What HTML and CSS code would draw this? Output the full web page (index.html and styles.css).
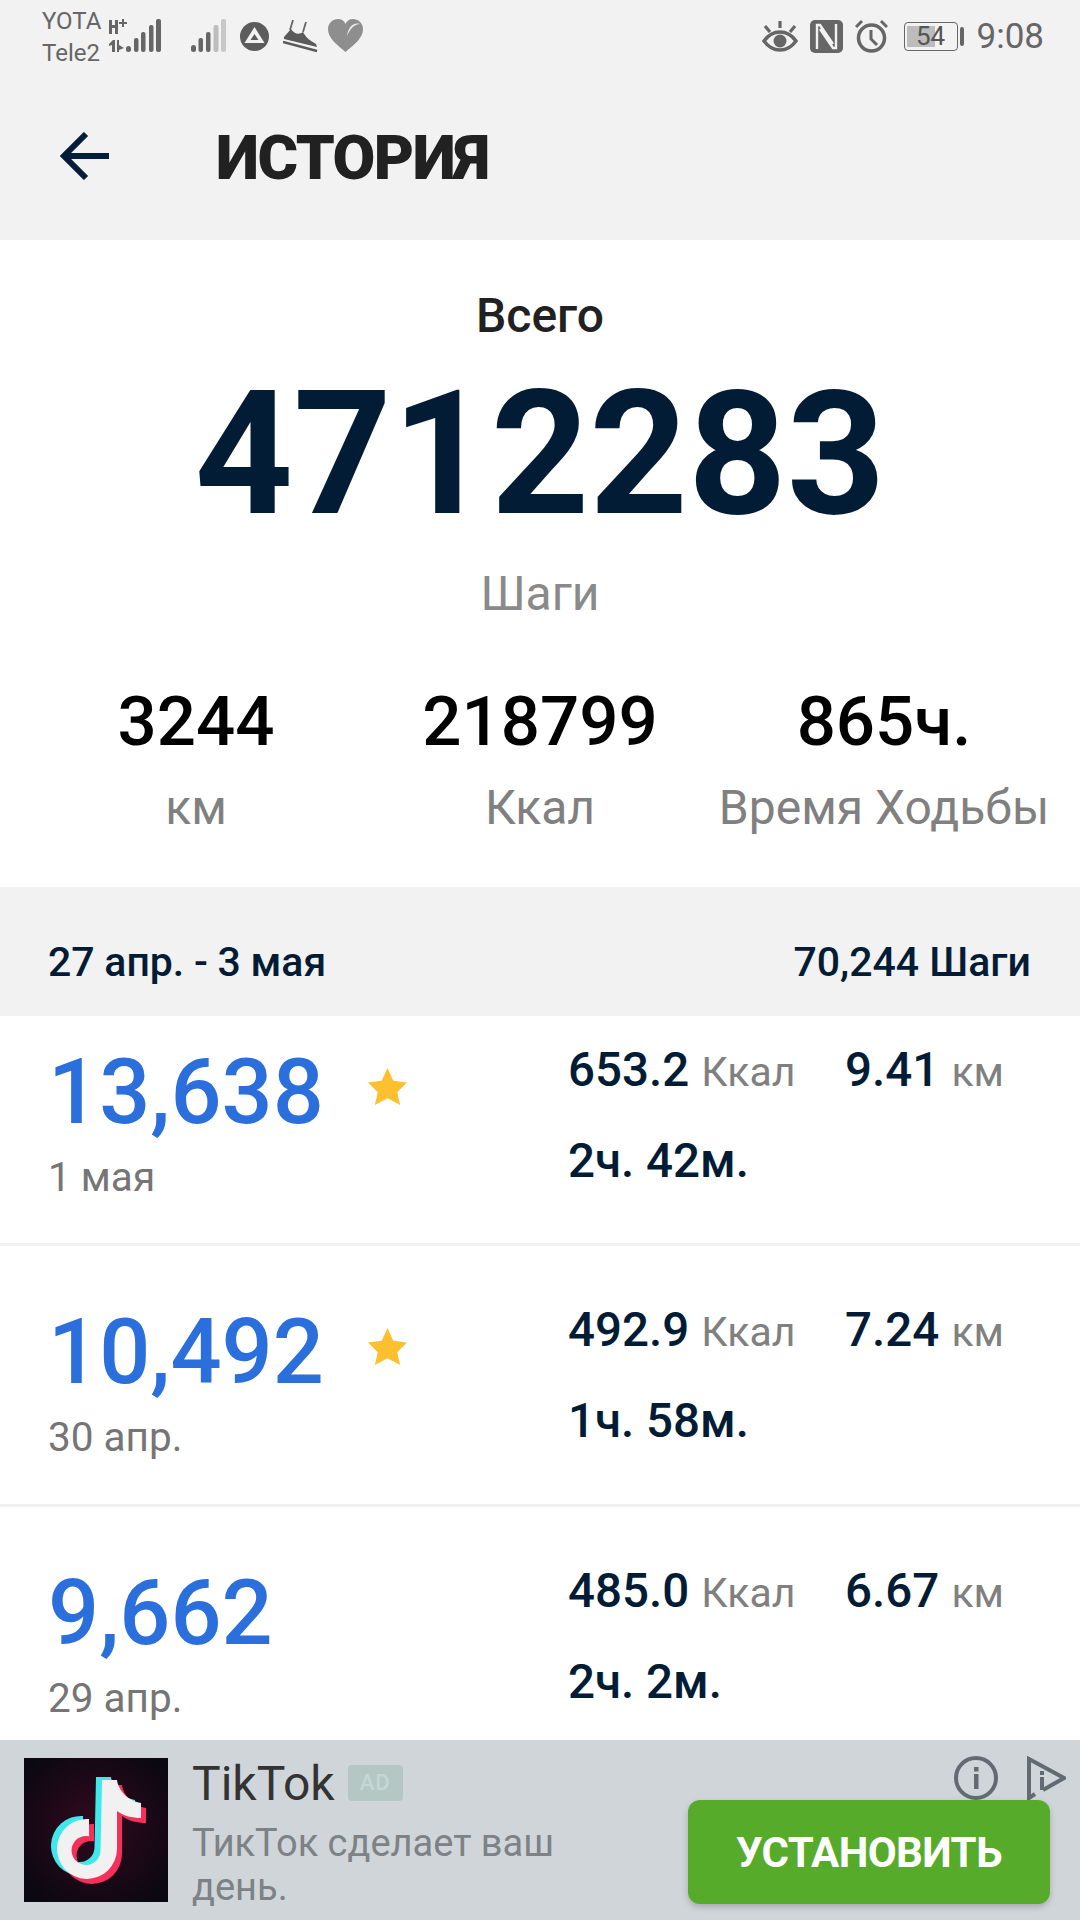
FILE: index.html
```html
<!DOCTYPE html>
<html lang="ru">
<head>
<meta charset="utf-8">
<title>История</title>
<link rel="stylesheet" href="styles.css">
</head>
<body>
<div class="page">
  <header class="top">
    <div class="status">
      <div class="status-left">
        <div class="carriers"><span>YOTA</span><span>Tele2</span></div>
        <svg class="ic-sig1" viewBox="0 0 52 33" width="52" height="33">
          <g fill="#666">
            <path d="M0 1h3v5h3V1h3v14H6V9H3v6H0z"/><path d="M10 3h3V0h2v3h3v2h-3v3h-2V5h-3z"/>
            <path d="M0 25l4-4h2v12H3v-7l-3 1zM8 21h2v5l5 3-5 2v2H8z"/>
            <rect x="17" y="27" width="5" height="6" rx="2.5"/><rect x="25" y="19" width="4.5" height="14" rx="2"/><rect x="32" y="13" width="4.5" height="20" rx="2"/><rect x="40" y="6" width="4.5" height="27" rx="2"/><rect x="47" y="0" width="5" height="33" rx="2"/>
          </g>
        </svg>
        <svg class="ic-sig2" viewBox="0 0 35 33" width="35" height="33">
          <rect x="0" y="26" width="5" height="7" rx="2.5" fill="#666"/><rect x="7.5" y="19" width="4.5" height="14" rx="2" fill="#666"/><rect x="15" y="13" width="4.5" height="20" rx="2" fill="#666"/><rect x="22.5" y="6" width="5" height="27" rx="2" fill="#bdbdbd"/><rect x="30" y="0" width="5" height="33" rx="2" fill="#c8c8c8"/>
        </svg>
        <svg class="ic-a" viewBox="0 0 29 29" width="29" height="29">
          <circle cx="14.500" cy="14.500" r="14.500" fill="#5c5c5c"/><path d="M14.500 5L24.500 21H4.500zM14.500 12L10.500 18H18.500z" fill="#f2f2f2" fill-rule="evenodd"/>
        </svg>
        <svg class="ic-shoe" viewBox="0 0 35 33" width="35" height="33">
          <path d="M10 0L7 10M23 2L20 12" stroke="#666" stroke-width="1.800" fill="none"/>
          <path d="M1 17L8 9C11 14 16 15 20 12 23 18 28 21 33 24L34 27 1 19z" fill="#5a5a5a"/>
          <path d="M0 22L34 31" stroke="#5a5a5a" stroke-width="2.600" fill="none"/>
        </svg>
        <svg class="ic-heart" viewBox="0 0 35 33" width="35" height="33">
          <path d="M17.500 33C8 25 0 19 0 10 0 4 5 0 10 0c4 0 6.500 2 7.500 5 1-3 3.500-5 7.500-5 5 0 10 4 10 10 0 9-8 15-17.500 23z" fill="#8e8e8e"/>
          <path d="M19 17C20 9 25 3 32 5 26 5 22 10 19 17z" fill="#efefef"/>
        </svg>
      </div>
      <div class="status-right">
        <svg class="ic-eye" viewBox="0 0 36 31" width="36" height="31">
          <path d="M2 20C7 13 12 11 18 11s11 2 16 9c-5 7-10 9-16 9S7 27 2 20z" fill="none" stroke="#666" stroke-width="3.500"/><circle cx="18" cy="20" r="6.500" fill="#666"/>
          <path d="M18 0v7M3 5l5 6M33 5l-5 6" stroke="#666" stroke-width="3.200" fill="none"/>
        </svg>
        <svg class="ic-nfc" viewBox="0 0 33 33" width="33" height="33">
          <rect width="33" height="33" rx="5" fill="#666"/><path d="M7 29V5h3l13 19M26 4v24h-3L10 9" stroke="#f2f2f2" stroke-width="2.400" fill="none"/>
        </svg>
        <svg class="ic-clock" viewBox="0 0 33 34" width="33" height="34">
          <circle cx="16.500" cy="19" r="13" fill="none" stroke="#666" stroke-width="3.500"/><path d="M16 11v9l6 6" fill="none" stroke="#666" stroke-width="3"/><path d="M1 8l6-6M32 8l-6-6" stroke="#666" stroke-width="3"/>
        </svg>
        <div class="battery"><div class="battery-body"><div class="battery-fill"></div><span>54</span></div><div class="battery-tip"></div></div>
        <span class="clock">9:08</span>
      </div>
    </div>
    <div class="toolbar">
      <svg class="back" viewBox="0 0 49 48" width="49" height="48">
        <path d="M49 24H4M26 2L4 24l22 22" fill="none" stroke="#021e3a" stroke-width="6"/>
      </svg>
      <h1>ИСТОРИЯ</h1>
    </div>
  </header>

  <section class="summary">
    <div class="total-label">Всего</div>
    <div class="total">4712283</div>
    <div class="total-unit">Шаги</div>
    <div class="stats">
      <div class="stat"><b>3244</b><span>км</span></div>
      <div class="stat"><b>218799</b><span>Ккал</span></div>
      <div class="stat"><b>865ч.</b><span>Время Ходьбы</span></div>
    </div>
  </section>

  <div class="week"><span class="week-range">27 апр. - 3 мая</span><span>70,244 Шаги</span></div>

  <main class="list">
    <article class="row row-first">
      <div class="day">
        <div class="steps"><span>13,638</span><svg class="star" viewBox="0 0 40 38" width="41" height="37"><path d="M20 0l6 13 14 2-10 10 3 13-13-7-13 7 3-13L0 15l14-2z" fill="#fdc02f"/></svg></div>
        <div class="date">1 мая</div>
      </div>
      <div class="metrics">
        <div class="m m-kcal"><b>653.2</b> <span>Ккал</span></div><div class="m"><b>9.41</b> <span>км</span></div>
        <div class="m m-time"><b>2ч. 42м.</b></div>
      </div>
    </article>
    <article class="row">
      <div class="day">
        <div class="steps"><span>10,492</span><svg class="star" viewBox="0 0 40 38" width="41" height="37"><path d="M20 0l6 13 14 2-10 10 3 13-13-7-13 7 3-13L0 15l14-2z" fill="#fdc02f"/></svg></div>
        <div class="date">30 апр.</div>
      </div>
      <div class="metrics">
        <div class="m m-kcal"><b>492.9</b> <span>Ккал</span></div><div class="m"><b>7.24</b> <span>км</span></div>
        <div class="m m-time"><b>1ч. 58м.</b></div>
      </div>
    </article>
    <article class="row">
      <div class="day">
        <div class="steps"><span>9,662</span></div>
        <div class="date">29 апр.</div>
      </div>
      <div class="metrics">
        <div class="m m-kcal"><b>485.0</b> <span>Ккал</span></div><div class="m"><b>6.67</b> <span>км</span></div>
        <div class="m m-time"><b>2ч. 2м.</b></div>
      </div>
    </article>
  </main>

  <aside class="ad">
    <svg class="ad-icon" viewBox="0 0 144 144" width="144" height="144">
      <defs>
        <radialGradient id="tkbg" cx="50%" cy="48%" r="62%"><stop offset="0" stop-color="#33091f"/><stop offset="1" stop-color="#0b0811"/></radialGradient>
        <path id="note" d="M78 22H93C94 31 103 43 117 45V60C108 60 100 58 93 53V91A30 30 0 1 1 65 61V78.300A14.500 14.500 0 1 0 76.500 92.500Z"/>
      </defs>
      <rect width="144" height="144" fill="url(#tkbg)"/>
      <use href="#note" transform="translate(-6 -3)" fill="#3fe8ec"/>
      <use href="#note" transform="translate(5 5)" fill="#f5305a"/>
      <use href="#note" fill="#f2f1f2"/>
    </svg>
    <div class="ad-text">
      <div class="ad-title"><span>TikTok</span><em>AD</em></div>
      <p>ТикТок сделает ваш день.</p>
    </div>
    <div class="ad-flags">
      <svg viewBox="0 0 44 44" width="44" height="44"><circle cx="22" cy="22" r="20" fill="none" stroke="#636a72" stroke-width="4"/><rect x="20" y="18" width="4.500" height="15" fill="#636a72"/><rect x="20" y="11" width="4.500" height="4.500" fill="#636a72"/></svg>
      <svg viewBox="0 0 41 44" width="41" height="44"><path d="M10 38L4 42V3L39 22L18 34" fill="none" stroke="#636a72" stroke-width="4"/><rect x="15" y="21" width="4" height="13" fill="#636a72"/><rect x="15" y="15" width="4" height="4" fill="#636a72"/></svg>
    </div>
    <button class="install">УСТАНОВИТЬ</button>
  </aside>
</div>
</body>
</html>
```
FILE: styles.css
```css
* { box-sizing: border-box; }
html, body { margin: 0; padding: 0; }
body { font-family: Roboto, "Noto Sans", sans-serif; background: #fff; }
.page { width: 1080px; height: 1920px; display: flex; flex-direction: column; overflow: hidden; }

.top { height: 240px; background: #f2f2f2; flex: none; }
.status { height: 72px; display: flex; justify-content: space-between; padding: 5px 36px 0 42px; }
.status-left, .status-right { display: flex; align-items: flex-start; }
.carriers { display: flex; flex-direction: column; flex: none; font-size: 24px; line-height: 32px; color: #666; width: 67px; }
.ic-sig1 { margin: 14px 0 0 0; }
.ic-sig2 { margin: 14px 0 0 30px; }
.ic-a { margin: 17px 0 0 14px; }
.ic-shoe { margin: 15px 0 0 14px; }
.ic-heart { margin: 14px 0 0 10px; }
.ic-eye { margin: 16px 0 0 0; }
.ic-nfc { margin: 15px 0 0 12px; }
.ic-clock { margin: 14px 0 0 12px; }
.battery { display: flex; align-items: center; margin: 17px 0 0 16px; }
.battery-body { position: relative; width: 54px; height: 29px; border: 1.5px solid #666; border-radius: 4px; font-size: 26px; line-height: 26px; text-align: center; color: #555; }
.battery-fill { position: absolute; left: 2px; top: 3px; bottom: 3px; width: 28px; background: #bcbcbc; }
.battery-body span { position: relative; }
.battery-tip { width: 4px; height: 19px; background: #666; margin-left: 2px; border-radius: 2px; }
.clock { font-size: 35px; line-height: 40px; color: #666; margin: 12px 0 0 13px; }

.toolbar { height: 168px; display: flex; align-items: center; padding: 0 0 0 60px; }
.back { flex: none; }
.toolbar h1 { margin: 4px 0 0 107px; font-size: 62px; line-height: 70px; font-weight: 900; letter-spacing: -1.5px; color: #212121; }

.summary { height: 647px; flex: none; padding-top: 48px; text-align: center; background: #fff; }
.total-label { font-size: 48px; line-height: 56px; font-weight: 500; color: #212121; }
.total { font-size: 172px; line-height: 200px; font-weight: 700; color: #021c36; margin-top: 10px; }
.total-unit { font-size: 48px; line-height: 56px; color: #8a8a8a; margin-top: 12px; }
.stats { display: grid; grid-template-columns: repeat(3, 344px); justify-content: center; margin-top: 60px; }
.stat { display: flex; flex-direction: column; align-items: center; }
.stat b { font-size: 69px; line-height: 80px; font-weight: 500; color: #000; }
.stat span { font-size: 48px; line-height: 56px; color: #808080; margin-top: 18px; white-space: nowrap; }

.week { height: 129px; flex: none; background: #f2f2f2; display: flex; justify-content: space-between; align-items: center; padding: 20px 49px 0 48px; font-size: 41px; font-weight: 500; color: #021c36; }
.week-range { word-spacing: -.5px; }

.list { flex: 1; min-height: 0; overflow: hidden; background: #fff; }
.row { height: 261px; display: flex; padding: 30px 0 0 48px; border-bottom: 3px solid #f0f0f0; }
.row-first { height: 230px; padding-top: 0; }
.day { width: 520px; flex: none; }
.steps { display: flex; align-items: center; height: 108px; margin-top: 23px; font-size: 90px; font-weight: 500; color: #2a6fdc; line-height: 108px; }
.star { margin: 0 0 13px 43px; }
.date { font-size: 40.500px; line-height: 48px; color: #757575; margin-top: 6px; }
.metrics { display: grid; grid-template-columns: 277px auto; grid-auto-rows: 91px; align-content: start; padding-top: 9px; }
.m { font-size: 41px; line-height: 91px; color: #808080; white-space: nowrap; }
.m span { margin-left: 2px; }
.m b { font-size: 47.5px; font-weight: 500; color: #021c36; }
.m-time { grid-column: 1 / -1; }

.ad { position: relative; height: 180px; flex: none; background: #d0d5da; display: flex; padding: 18px 0 0 24px; }
.ad-icon { flex: none; }
.ad-text { margin-left: 24px; width: 390px; }
.ad-title { display: flex; align-items: center; height: 48px; margin-top: 1px; font-size: 48px; color: #333; }
.ad-title em { font-style: normal; font-size: 22px; font-weight: 500; color: #c6d6d3; background: #b4c7c4; border-radius: 4px; padding: 0 12px; height: 36px; line-height: 36px; margin-left: 13px; letter-spacing: 1px; }
.ad-text p { margin: 14px 0 0; font-size: 38px; line-height: 44px; color: #7c8285; }
.ad-flags { position: absolute; left: 954px; top: 16px; display: flex; gap: 27px; }
.install { position: absolute; left: 688px; top: 60px; width: 362px; height: 104px; border: 0; border-radius: 12px; background: #57ab2a; color: #fff; font: 700 42px Roboto, sans-serif; letter-spacing: -.6px; box-shadow: 0 3px 6px rgba(0,0,0,.2); }
```
